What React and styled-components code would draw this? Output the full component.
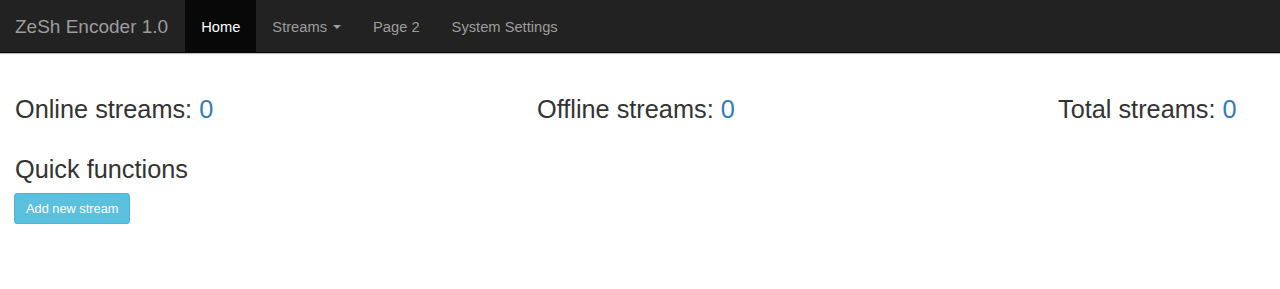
import React from "react";
import styled, { createGlobalStyle } from "styled-components";

const GlobalStyle = createGlobalStyle`
  body {
    margin: 0;
    background: #fff;
    font-family: "Liberation Sans", Arial, Helvetica, sans-serif;
    color: #333;
  }
`;

const stats = [
  { label: "Online streams:", value: 0 },
  { label: "Offline streams:", value: 0 },
  { label: "Total streams:", value: 0 },
];

const App = () => {
  return (
    <>
      <GlobalStyle />
      <Navbar>
        <Brand>ZeSh Encoder 1.0</Brand>
        <NavList>
          <NavItem $active>Home</NavItem>
          <NavItem>
            Streams <Caret />
          </NavItem>
          <NavItem>Page 2</NavItem>
          <NavItem>System Settings</NavItem>
        </NavList>
      </Navbar>
      <Container>
        <StatsRow>
          {stats.map((s) => (
            <Stat key={s.label}>
              {s.label} <Count>{s.value}</Count>
            </Stat>
          ))}
        </StatsRow>
        <SectionTitle>Quick functions</SectionTitle>
        <InfoButton>Add new stream</InfoButton>
      </Container>
    </>
  );
};

export default App;

const Navbar = styled.nav`
  height: 52px;
  background-color: #222;
  border-bottom: 1px solid #080808;
  box-shadow: 0 1px 1px rgba(0, 0, 0, 0.25);
  display: flex;
  align-items: stretch;
`;

const Brand = styled.a`
  display: flex;
  align-items: center;
  padding: 2px 17px 0 15px;
  font-size: 19px;
  color: #9d9d9d;
  white-space: nowrap;
`;

const NavList = styled.ul`
  display: flex;
  margin: 0;
  padding: 0;
  list-style: none;
`;

const NavItem = styled.li`
  display: flex;
  align-items: center;
  padding: 2px 16px 0;
  font-size: 14.7px;
  color: ${(p) => (p.$active ? "#fff" : "#9d9d9d")};
  background-color: ${(p) => (p.$active ? "#080808" : "transparent")};
  white-space: nowrap;
`;

const Caret = styled.span`
  display: inline-block;
  width: 0;
  height: 0;
  margin-left: 6px;
  border-top: 4px solid #9d9d9d;
  border-left: 4px solid transparent;
  border-right: 4px solid transparent;
`;

const Container = styled.div`
  padding: 0 15px;
`;

const StatsRow = styled.div`
  display: grid;
  grid-template-columns: 522px 521px 1fr;
  margin-top: 41px;
`;

const Stat = styled.h3`
  margin: 0;
  font-size: 25.3px;
  font-weight: 400;
  line-height: 30px;
  white-space: nowrap;
`;

const Count = styled.span`
  color: #337ab7;
`;

const SectionTitle = styled.h3`
  margin: 30px 0 9px;
  font-size: 25.3px;
  font-weight: 400;
  line-height: 30px;
`;

const InfoButton = styled.button`
  display: block;
  width: 116px;
  height: 31px;
  padding: 0 11px;
  margin-left: -1px;
  font-family: inherit;
  font-size: 12.8px;
  color: #fff;
  background-color: #5bc0de;
  border: 1px solid #46b8da;
  border-radius: 3px;
  white-space: nowrap;
`;
